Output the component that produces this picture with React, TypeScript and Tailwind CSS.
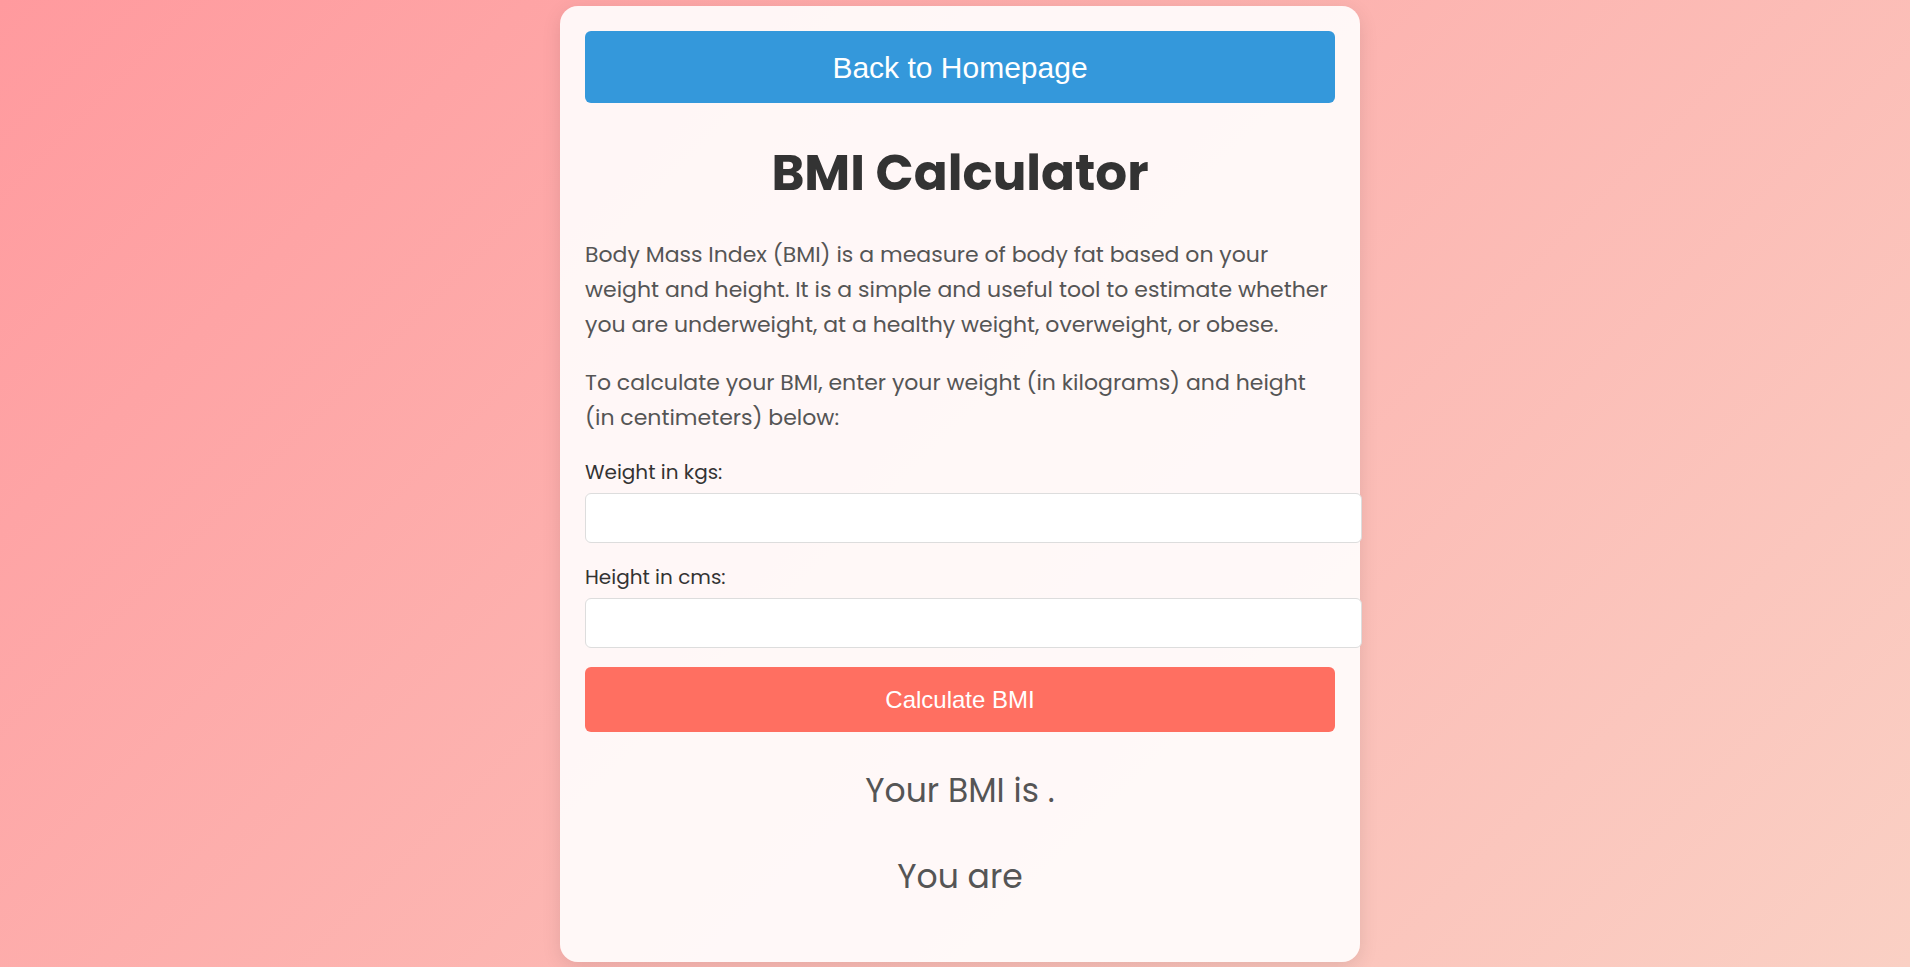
import { useState, type FormEvent } from "react";

const fieldClass =
  "mt-1.5 block h-[50px] w-[calc(100%+27px)] rounded-md border border-[#dddddd] bg-white px-3 font-['Liberation_Sans',Arial,sans-serif] text-xl text-[#333333]";

function category(bmi: number): string {
  if (bmi < 18.5) return "underweight";
  if (bmi < 25) return "at a healthy weight";
  if (bmi < 30) return "overweight";
  return "obese";
}

export default function App() {
  const [weight, setWeight] = useState("");
  const [height, setHeight] = useState("");
  const [bmi, setBmi] = useState<number | null>(null);

  function calculate(event: FormEvent) {
    event.preventDefault();
    const meters = Number(height) / 100;
    const value = Number(weight) / (meters * meters);
    setBmi(Number.isFinite(value) && value > 0 ? value : null);
  }

  return (
    <div className="flex min-h-screen items-center justify-center bg-linear-[135deg,#ff9a9e,#fad0c4] pt-[5px] pb-1 pl-[10px] font-[Poppins,Inter,sans-serif] text-[#333333]">
      <main className="w-full max-w-[800px] rounded-[18px] bg-white/90 px-[25px] pt-[25px] pb-[61px] shadow-[0_5px_19px_rgba(0,0,0,0.1)]">
        <button
          type="button"
          className="h-[72px] w-full rounded-md bg-[#3498db] font-['Liberation_Sans',Arial,sans-serif] text-[30px] text-white"
        >
          Back to Homepage
        </button>
        <h1 className="mt-10 text-center text-[50px] leading-[60px] font-bold">BMI Calculator</h1>
        <div className="mt-[34px] space-y-[23px] text-[22px] leading-[35px] text-[#555555]">
          <p>
            Body Mass Index (BMI) is a measure of body fat based on your weight and height. It is a
            simple and useful tool to estimate whether you are underweight, at a healthy weight,
            overweight, or obese.
          </p>
          <p>
            To calculate your BMI, enter your weight (in kilograms) and height (in centimeters)
            below:
          </p>
        </div>
        <form onSubmit={calculate} className="mt-[22px]">
          <label htmlFor="weight" className="block text-xl leading-[30px]">
            Weight in kgs:
          </label>
          <input
            id="weight"
            type="text"
            inputMode="decimal"
            value={weight}
            onChange={(e) => setWeight(e.target.value)}
            className={fieldClass}
          />
          <label htmlFor="height" className="mt-[19px] block text-xl leading-[30px]">
            Height in cms:
          </label>
          <input
            id="height"
            type="text"
            inputMode="decimal"
            value={height}
            onChange={(e) => setHeight(e.target.value)}
            className={fieldClass}
          />
          <button
            type="submit"
            className="mt-[19px] block h-[65px] w-full rounded-md bg-[#ff6f61] font-['Liberation_Sans',Arial,sans-serif] text-2xl text-white"
          >
            Calculate BMI
          </button>
        </form>
        <div className="mt-[35px] space-y-[38px] text-center text-[33px] leading-12 text-[#555555]">
          <p>Your BMI is {bmi === null ? "" : bmi.toFixed(2)}.</p>
          <p>You are {bmi === null ? "" : category(bmi)}</p>
        </div>
      </main>
    </div>
  );
}
